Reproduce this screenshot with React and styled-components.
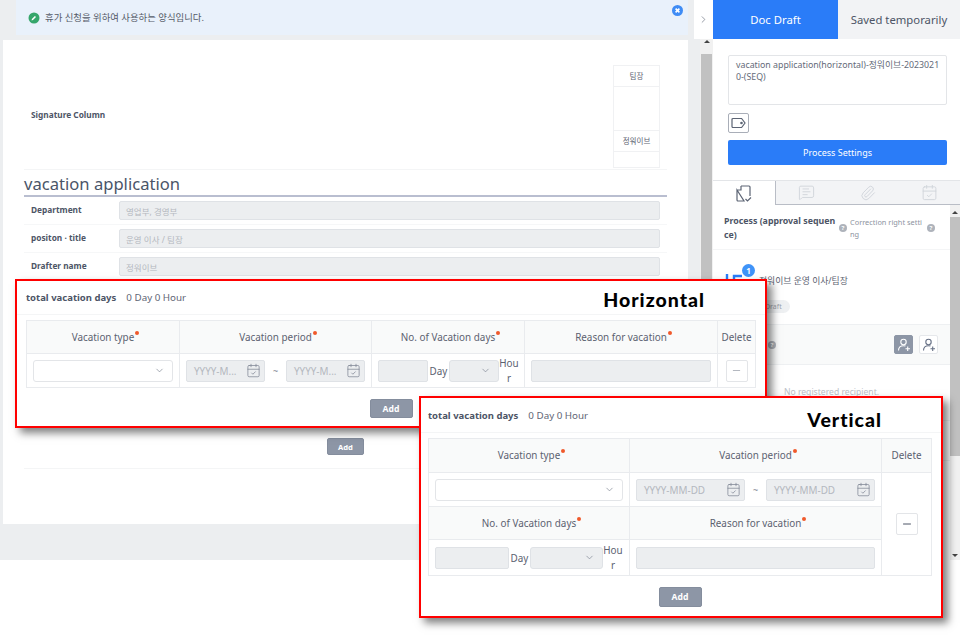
import React from 'react'
import styled, { createGlobalStyle } from 'styled-components'
import {
  CalendarCheck,
  ChevronDown,
  ChevronRight,
  MessageSquareText,
  Minus,
  Paperclip,
} from 'lucide-react'

const Global = createGlobalStyle`
  html, body { margin: 0; padding: 0; background: #fff; }
  body {
    font-family: "Noto Sans", "Noto Sans CJK KR", sans-serif;
    color: #4d5566;
    width: 960px;
    height: 636px;
    overflow: hidden;
  }
  * { box-sizing: border-box; }
`

const Page = styled.div`
  position: relative;
  width: 960px;
  height: 636px;
  overflow: hidden;
  background: #fff;
`

const Frame = styled.div`
  display: flex;
  height: 560px;
  background: #eceef0;
`

const Main = styled.div`
  width: 700px;
  padding: 0 12px 0 3px;
`

const Alert = styled.div`
  display: flex;
  align-items: center;
  gap: 5px;
  height: 35px;
  margin-left: 13px;
  padding: 0 5px 0 12px;
  background: #e9f1fb;
  font-size: 9.4px;
  color: #555b68;
`

const AlertText = styled.span`
  flex: 1;
  position: relative;
  top: -1px;
`

const AlertClose = styled.span`
  align-self: flex-start;
  margin-top: 5px;
`

const Paper = styled.div`
  margin-top: 5px;
  height: 484px;
  padding: 0 21px;
  background: #fff;
`

const SignRow = styled.div`
  display: flex;
  align-items: center;
  justify-content: space-between;
  height: 130px;
  padding: 26px 7px 3px;
  border-bottom: 1px solid #f4f5f6;
`

const BoldLabel = styled.span`
  font-size: 8.3px;
  font-weight: 700;
  color: #4d5566;
`

const SignLabel = styled(BoldLabel)`
  margin-bottom: 4px;
`

const SignTable = styled.div`
  display: grid;
  grid-template-rows: 21px 44px 21px 15px;
  width: 47px;
  border: 1px solid #f0f1f3;
  font-size: 7.5px;
  color: #5b6170;
`

const SignCell = styled.div`
  display: flex;
  align-items: center;
  justify-content: center;
  border-bottom: 1px solid #f0f1f3;
  &:last-child { border-bottom: 0; }
`

const DocTitle = styled.h1`
  margin: 0;
  height: 27px;
  padding-top: 2px;
  border-bottom: 2px solid #b9bed0;
  font-size: 16.6px;
  line-height: 24px;
  font-weight: 400;
  color: #4a5568;
`

const FormRow = styled.div`
  display: flex;
  align-items: center;
  height: 28px;
  padding: 0 7px;
  border-bottom: 1px solid #f6f7f8;
`

const FormLabel = styled(BoldLabel)`
  position: relative;
  top: -1px;
  width: 88px;
  flex: none;
`

const ReadField = styled.div`
  flex: 1;
  display: flex;
  align-items: center;
  height: 19px;
  padding: 0 6px;
  background: #eceef0;
  border: 1px solid #dfe2e6;
  border-radius: 2px;
  font-size: 8.5px;
  color: #b4b8bf;
`

const TableSection = styled.div`
  display: flex;
  justify-content: center;
  align-items: flex-end;
  height: 188px;
  padding-bottom: 13px;
  border-bottom: 1px solid #f4f5f6;
`

const AddButton = styled.button`
  width: ${p => p.$w}px;
  height: ${p => p.$h}px;
  padding: 0;
  border: 1px solid #848d9d;
  border-radius: 2px;
  background: #8d96a6;
  color: #fff;
  font: 700 ${p => p.$size}px "Noto Sans", sans-serif;
`

const ScrollTrack = styled.div`
  display: flex;
  flex-direction: column;
  align-items: center;
  flex: none;
  width: ${p => p.$w}px;
  background: #f1f1f1;
`

const ScrollArrow = styled.span`
  width: 0;
  height: 0;
  margin-top: ${p => p.$top}px;
  border-left: 3px solid transparent;
  border-right: 3px solid transparent;
  ${p => (p.$down
    ? 'border-top: 3px solid #444;'
    : 'border-bottom: 3px solid #444;')}
`

const ScrollThumb = styled.span`
  width: ${p => p.$w}px;
  height: ${p => p.$h}px;
  margin-top: ${p => p.$top}px;
  background: #c1c1c1;
`

const Toggle = styled.div`
  position: absolute;
  left: 694px;
  top: 0;
  display: flex;
  align-items: center;
  justify-content: center;
  width: 19px;
  height: 39px;
  background: #fff;
  color: #6b7280;
`

const Side = styled.aside`
  flex: 1;
  display: flex;
  flex-direction: column;
  background: #fff;
  min-width: 0;
`

const SideTabs = styled.div`
  display: grid;
  grid-template-columns: 125px 1fr;
  height: 39px;
  flex: none;
`

const SideTab = styled.div`
  display: flex;
  align-items: center;
  justify-content: center;
  font-size: 11.3px;
  background: ${p => (p.$active ? '#2a7cf8' : '#f2f3f5')};
  color: ${p => (p.$active ? '#fff' : '#4d5566')};
`

const DraftForm = styled.div`
  display: flex;
  flex-direction: column;
  align-items: flex-start;
  padding: 16px 13px 15px 15px;
  flex: none;
`

const TitleBox = styled.div`
  width: 100%;
  height: 50px;
  padding: 3px 4px 3px 7px;
  border: 1px solid #e3e5e8;
  border-radius: 2px;
  font-size: 8.8px;
  line-height: 12px;
  color: #646a78;
  word-break: break-all;
`

const TagButton = styled.button`
  display: flex;
  align-items: center;
  justify-content: center;
  width: 21px;
  height: 20px;
  margin-top: 8px;
  padding: 0;
  background: #fff;
  border: 1px solid #a9aeb8;
  border-radius: 2px;
  color: #5c6474;
`

const ProcessButton = styled.button`
  width: 100%;
  height: 25px;
  margin-top: 7px;
  border: 0;
  border-radius: 2px;
  background: #2a7cf8;
  color: #fff;
  font: 400 9px "Noto Sans", sans-serif;
`

const IconTabs = styled.div`
  display: grid;
  grid-template-columns: 63px 61px 62px 1fr;
  height: 25px;
  flex: none;
  background: #f3f4f6;
  border-top: 1px solid #e3e5e8;
`

const IconTab = styled.div`
  display: flex;
  align-items: center;
  justify-content: center;
  color: ${p => (p.$active ? '#5c6474' : '#d0d4da')};
  background: ${p => (p.$active ? '#fff' : 'transparent')};
  border-right: ${p => (p.$active ? '1px solid #b9bdc6' : '0')};
  border-bottom: ${p => (p.$active ? '0' : '1px solid #b9bdc6')};
`

const SideBody = styled.div`
  flex: 1;
  display: flex;
  min-height: 0;
`

const SideContent = styled.div`
  flex: 1;
  min-width: 0;
`

const ProcessRow = styled.div`
  display: flex;
  align-items: center;
  height: 45px;
  padding: 1px 0 0 11px;
  border-bottom: 1px solid #f4f5f6;
`

const ProcessTitle = styled.span`
  width: 113px;
  flex: none;
  font-size: 8.8px;
  line-height: 14px;
  font-weight: 700;
  color: #4d5566;
  word-break: break-all;
`

const RightNote = styled.span`
  width: 74px;
  flex: none;
  margin-left: 3px;
  font-size: 7.4px;
  line-height: 12px;
  color: #8d93a0;
  word-break: break-all;
`

const Help = styled.span`
  display: inline-flex;
  align-items: center;
  justify-content: center;
  flex: none;
  width: 8px;
  height: 8px;
  margin-left: ${p => p.$left || 0}px;
  margin-right: ${p => (p.$pushed ? 'auto' : '0')};
  border-radius: 50%;
  background: #aeb3bb;
  color: #fff;
  font-size: 6px;
  font-weight: 700;
  line-height: 1;
`

const ApproverRow = styled.div`
  height: 75px;
  padding: 18px 0 0 12px;
  border-bottom: 1px solid #eef0f2;
`

const ApproverLine = styled.div`
  display: flex;
  align-items: center;
  height: 24px;
  font-size: 8.8px;
  color: #5b6170;
`

const AvatarWrap = styled.span`
  position: relative;
  display: block;
  width: 34px;
  height: 24px;
  padding-top: 4px;
  flex: none;
  color: #2a7cf8;
`

const CountBadge = styled.span`
  position: absolute;
  left: 17px;
  top: -4px;
  display: flex;
  align-items: center;
  justify-content: center;
  width: 13px;
  height: 13px;
  border-radius: 50%;
  background: #3f93f8;
  color: #fff;
  font-size: 8px;
  font-weight: 700;
`

const StatusPill = styled.span`
  display: inline-flex;
  align-items: center;
  height: 13px;
  margin: -3px 0 0 26px;
  padding: 0 8px 0 14px;
  border-radius: 7px;
  background: #eef0f2;
  font-size: 7px;
  color: #9aa0ab;
`

const RecipientHead = styled.div`
  display: flex;
  align-items: center;
  gap: 6px;
  height: 40px;
  padding-right: 12px;
  background: #f9fafa;
  border-bottom: 1px solid #eef0f2;
`

const PersonButton = styled.span`
  display: flex;
  align-items: center;
  justify-content: center;
  width: 19px;
  height: 19px;
  border-radius: 2px;
  border: 1px solid ${p => (p.$filled ? '#8d96a6' : '#e6e8eb')};
  background: ${p => (p.$filled ? '#8d96a6' : '#fff')};
  color: ${p => (p.$filled ? '#fff' : '#667085')};
`

const EmptyNote = styled.div`
  height: 56px;
  padding-top: 21px;
  text-align: center;
  font-size: 8.6px;
  color: #bcc0c7;
  border-bottom: 1px solid #f1f2f4;
`

const BlankRow = styled.div`
  height: 40px;
  border-bottom: 1px solid #f1f2f4;
`

const Callout = styled.section`
  position: absolute;
  left: ${p => p.$x}px;
  top: ${p => p.$y}px;
  width: ${p => p.$w}px;
  height: ${p => p.$h}px;
  padding: 0 9px 0 ${p => p.$inset}px;
  background: #fff;
  border: 2px solid #f00;
  box-shadow: 5px 5px 8px rgba(0, 0, 0, 0.5);
`

const CalloutHead = styled.div`
  display: flex;
  align-items: center;
  height: ${p => p.$h}px;
  margin: 0 -9px 0 -${p => p.$inset}px;
  padding: 0 9px 0 ${p => p.$inset}px;
  border-bottom: 1px solid #f4f5f6;
`

const TotalLabel = styled.span`
  font-size: 9.5px;
  font-weight: 700;
  color: #4d5566;
`

const TotalValue = styled.span`
  margin-left: 10px;
  font-size: 9.8px;
  color: #5f6675;
`

const CalloutName = styled.span`
  margin-left: auto;
  margin-right: ${p => p.$right}px;
  padding-top: ${p => p.$drop}px;
  font-family: "Lato", sans-serif;
  font-size: 19.5px;
  font-weight: 900;
  letter-spacing: 1px;
  color: #000;
`

const VacationTable = styled.table`
  width: 100%;
  margin-top: 5px;
  table-layout: fixed;
  border-collapse: collapse;
  border: 1px solid #e9ebee;
  font-size: 9.9px;
  color: #5b6170;
`

const HeadCell = styled.th`
  height: ${p => p.$h || 33}px;
  padding: 0 0 1px;
  background: #f9fafa;
  border: 1px solid #e9ebee;
  font-weight: 400;
  text-align: center;
`

const BodyCell = styled.td`
  height: ${p => p.$h || 34}px;
  padding: 0 6px;
  border: 1px solid #e9ebee;
  text-align: center;
`

// the dot takes no width, so the header text stays centred on its own
const Required = styled.i`
  position: relative;
  display: inline-block;
  width: 0;
  height: 0;

  &::after {
    content: '';
    position: absolute;
    left: 1px;
    top: -10px;
    width: 4px;
    height: 4px;
    border-radius: 50%;
    background: #f0592b;
  }
`

const InputRow = styled.div`
  display: flex;
  align-items: center;
`

const SelectBox = styled.div`
  display: flex;
  align-items: center;
  justify-content: flex-end;
  flex: ${p => (p.$w ? 'none' : 1)};
  width: ${p => (p.$w ? `${p.$w}px` : 'auto')};
  height: 22px;
  padding-right: 7px;
  background: ${p => (p.$disabled ? '#eceef0' : '#fff')};
  border: 1px solid ${p => (p.$disabled ? '#dfe2e6' : '#e3e5e8')};
  border-radius: 3px;
  color: #7d8492;
`

const DateBox = styled.div`
  display: flex;
  align-items: center;
  flex: 1;
  min-width: 0;
  height: 22px;
  padding: 0 3px 0 7px;
  background: #eceef0;
  border: 1px solid #dfe2e6;
  border-radius: 2px;
  color: #7f8694;
`

const DateText = styled.span`
  flex: 1;
  min-width: 0;
  white-space: nowrap;
  text-align: left;
  color: #b4b8bf;
`

const Tilde = styled.span`
  width: 21px;
  flex: none;
  font-size: 9px;
  color: #7d8492;
`

const PlainInput = styled.div`
  flex: ${p => (p.$w ? 'none' : 1)};
  width: ${p => (p.$w ? `${p.$w}px` : 'auto')};
  height: 22px;
  background: #eceef0;
  border: 1px solid #dfe2e6;
  border-radius: 2px;
`

const DayLabel = styled.span`
  width: 21px;
  flex: none;
`

const HourLabel = styled.span`
  width: 20px;
  flex: none;
  line-height: 15px;
  word-break: break-all;
  text-align: center;
`

const DeleteButton = styled.button`
  display: inline-flex;
  align-items: center;
  justify-content: center;
  width: 22px;
  height: 22px;
  padding: 0;
  background: #fff;
  border: 1px solid #e3e5e8;
  border-radius: 2px;
  color: ${p => (p.$dark ? '#4d5566' : '#8a909d')};
`

const CalloutFooter = styled.div`
  display: flex;
  justify-content: center;
  margin-top: 11px;
`

const Svg = styled.svg`
  display: block;
  flex: none;
`

const CheckBadge = () => (
  <Svg width="12" height="12" viewBox="0 0 12 12">
    <circle cx="6" cy="6" r="5.5" fill="#35a66b" />
    <path d="M3.6 8.4l.3-1.4 3-3 1.1 1.1-3 3z" fill="#fff" />
  </Svg>
)

const CloseBadge = () => (
  <Svg width="11" height="11" viewBox="0 0 11 11">
    <circle cx="5.5" cy="5.5" r="5.5" fill="#3f8cf5" />
    <path d="M3.6 3.6l3.8 3.8M7.4 3.6L3.6 7.4" stroke="#fff" strokeWidth="1.6" />
  </Svg>
)

const TagIcon = () => (
  <Svg width="15" height="12" viewBox="0 0 15 12" fill="none" stroke="currentColor" strokeWidth="1.2">
    <path d="M1 2.5a1 1 0 0 1 1-1h8.6L14 6l-3.4 4.5H2a1 1 0 0 1-1-1z" />
    <circle cx="10.5" cy="6" r=".7" fill="currentColor" />
  </Svg>
)

const DocCheckIcon = () => (
  <Svg width="16" height="17" viewBox="0 0 16 17" fill="none" stroke="currentColor" strokeWidth="1.2">
    <path d="M5 1h8a1 1 0 0 1 1 1v9M8 16H2a1 1 0 0 1-1-1V5zM5 1v4H1" />
    <path d="M9.5 14l2 2 3.5-3.5" />
  </Svg>
)

const PersonPlus = () => (
  <Svg width="14" height="14" viewBox="0 0 14 14" fill="none" stroke="currentColor" strokeWidth="1.1">
    <circle cx="6.5" cy="4" r="2.7" />
    <path d="M1.5 12.5c0-3 2-4.8 5-4.8 .8 0 1.4.1 2 .4M10.7 8.5v4.5M8.5 10.8H13" />
  </Svg>
)

const Avatar = () => (
  <Svg width="20" height="14" viewBox="0 0 20 14" fill="none" stroke="currentColor" strokeWidth="2.4">
    <path d="M2 2v8c0 2 1.5 3 3.5 3S9 12 9 10V4h8" />
  </Svg>
)

const DateField = ({ placeholder }) => (
  <DateBox>
    <DateText>{placeholder}</DateText>
    <CalendarCheck size={15} strokeWidth={1.2} />
  </DateBox>
)

const DateRange = ({ placeholder }) => (
  <InputRow>
    <DateField placeholder={placeholder} />
    <Tilde>~</Tilde>
    <DateField placeholder={placeholder} />
  </InputRow>
)

const Chevron = () => <ChevronDown size={11} strokeWidth={1.5} />

const DaysInput = ({ dayWidth, selectWidth }) => (
  <InputRow>
    <PlainInput $w={dayWidth} />
    <DayLabel>Day</DayLabel>
    <SelectBox $w={selectWidth} $disabled>
      <Chevron />
    </SelectBox>
    <HourLabel>Hour</HourLabel>
  </InputRow>
)

const Total = ({ name, right, height, inset, drop }) => (
  <CalloutHead $h={height} $inset={inset}>
    <TotalLabel>total vacation days</TotalLabel>
    <TotalValue>0 Day 0 Hour</TotalValue>
    <CalloutName $right={right} $drop={drop}>{name}</CalloutName>
  </CalloutHead>
)

const Label = ({ children }) => (
  <>
    {children}
    <Required />
  </>
)

const HorizontalCallout = () => (
  <Callout $x={15} $y={279} $w={752} $h={149} $inset={9}>
    <Total name="Horizontal" right={51} height={34} inset={9} drop={4} />
    <VacationTable>
      <colgroup>
        <col width="153" />
        <col width="192" />
        <col width="153" />
        <col width="193" />
        <col />
      </colgroup>
      <thead>
        <tr>
          <HeadCell><Label>Vacation type</Label></HeadCell>
          <HeadCell><Label>Vacation period</Label></HeadCell>
          <HeadCell><Label>No. of Vacation days</Label></HeadCell>
          <HeadCell><Label>Reason for vacation</Label></HeadCell>
          <HeadCell>Delete</HeadCell>
        </tr>
      </thead>
      <tbody>
        <tr>
          <BodyCell>
            <InputRow>
              <SelectBox><Chevron /></SelectBox>
            </InputRow>
          </BodyCell>
          <BodyCell><DateRange placeholder="YYYY-M..." /></BodyCell>
          <BodyCell><DaysInput dayWidth={50} selectWidth={50} /></BodyCell>
          <BodyCell><PlainInput /></BodyCell>
          <BodyCell>
            <DeleteButton><Minus size={11} strokeWidth={1.4} /></DeleteButton>
          </BodyCell>
        </tr>
      </tbody>
    </VacationTable>
    <CalloutFooter>
      <AddButton $w={43} $h={19} $size={8.6}>Add</AddButton>
    </CalloutFooter>
  </Callout>
)

const VerticalCallout = () => (
  <Callout $x={419} $y={396} $w={524} $h={222} $inset={7}>
    <Total name="Vertical" right={50} height={35} inset={7} drop={8} />
    <VacationTable>
      <colgroup>
        <col width="201" />
        <col width="252" />
        <col />
      </colgroup>
      <tbody>
        <tr>
          <HeadCell $h={34}><Label>Vacation type</Label></HeadCell>
          <HeadCell $h={34}><Label>Vacation period</Label></HeadCell>
          <HeadCell $h={34}>Delete</HeadCell>
        </tr>
        <tr>
          <BodyCell>
            <InputRow>
              <SelectBox><Chevron /></SelectBox>
            </InputRow>
          </BodyCell>
          <BodyCell><DateRange placeholder="YYYY-MM-DD" /></BodyCell>
          <BodyCell rowSpan={3}>
            <DeleteButton $dark><Minus size={12} strokeWidth={2} /></DeleteButton>
          </BodyCell>
        </tr>
        <tr>
          <HeadCell><Label>No. of Vacation days</Label></HeadCell>
          <HeadCell><Label>Reason for vacation</Label></HeadCell>
        </tr>
        <tr>
          <BodyCell $h={36}><DaysInput dayWidth={74} selectWidth={73} /></BodyCell>
          <BodyCell $h={36}><PlainInput /></BodyCell>
        </tr>
      </tbody>
    </VacationTable>
    <CalloutFooter>
      <AddButton $w={43} $h={20} $size={8.6}>Add</AddButton>
    </CalloutFooter>
  </Callout>
)

const App = () => (
  <Page>
    <Global />
    <Frame>
      <Main>
        <Alert>
          <CheckBadge />
          <AlertText>휴가 신청을 위하여 사용하는 양식입니다.</AlertText>
          <AlertClose><CloseBadge /></AlertClose>
        </Alert>
        <Paper>
          <SignRow>
            <SignLabel>Signature Column</SignLabel>
            <SignTable>
              <SignCell>팀장</SignCell>
              <SignCell />
              <SignCell>정워이브</SignCell>
              <SignCell />
            </SignTable>
          </SignRow>
          <DocTitle>vacation application</DocTitle>
          <FormRow>
            <FormLabel>Department</FormLabel>
            <ReadField>영업부, 경영부</ReadField>
          </FormRow>
          <FormRow>
            <FormLabel>positon · title</FormLabel>
            <ReadField>운영 이사 / 팀장</ReadField>
          </FormRow>
          <FormRow>
            <FormLabel>Drafter name</FormLabel>
            <ReadField>정워이브</ReadField>
          </FormRow>
          <TableSection>
            <AddButton $w={37} $h={17} $size={7.6}>Add</AddButton>
          </TableSection>
        </Paper>
      </Main>
      <ScrollTrack $w={13}>
        <ScrollArrow $top={40} />
        <ScrollThumb $w={11} $h={504} $top={11} />
      </ScrollTrack>
      <Side>
        <SideTabs>
          <SideTab $active>Doc Draft</SideTab>
          <SideTab>Saved temporarily</SideTab>
        </SideTabs>
        <DraftForm>
          <TitleBox>vacation application(horizontal)-정워이브-20230210-(SEQ)</TitleBox>
          <TagButton><TagIcon /></TagButton>
          <ProcessButton>Process Settings</ProcessButton>
        </DraftForm>
        <IconTabs>
          <IconTab $active><DocCheckIcon /></IconTab>
          <IconTab><MessageSquareText size={17} strokeWidth={1.3} /></IconTab>
          <IconTab><Paperclip size={16} strokeWidth={1.4} /></IconTab>
          <IconTab><CalendarCheck size={17} strokeWidth={1.3} /></IconTab>
        </IconTabs>
        <SideBody>
          <SideContent>
            <ProcessRow>
              <ProcessTitle>Process (approval sequence)</ProcessTitle>
              <Help $left={2}>?</Help>
              <RightNote>Correction right setting</RightNote>
              <Help $left={3}>?</Help>
            </ProcessRow>
            <ApproverRow>
              <ApproverLine>
                <AvatarWrap>
                  <Avatar />
                  <CountBadge>1</CountBadge>
                </AvatarWrap>
                정워이브 운영 이사/팀장
              </ApproverLine>
              <StatusPill>Draft</StatusPill>
            </ApproverRow>
            <RecipientHead>
              <Help $left={55} $pushed>?</Help>
              <PersonButton $filled><PersonPlus /></PersonButton>
              <PersonButton><PersonPlus /></PersonButton>
            </RecipientHead>
            <EmptyNote>No registered recipient.</EmptyNote>
            <BlankRow />
          </SideContent>
          <ScrollTrack $w={10}>
            <ScrollArrow $top={6} />
            <ScrollThumb $w={10} $h={239} $top={3} />
            <ScrollArrow $top={98} $down />
          </ScrollTrack>
        </SideBody>
      </Side>
    </Frame>
    <Toggle><ChevronRight size={11} strokeWidth={1.5} /></Toggle>
    <HorizontalCallout />
    <VerticalCallout />
  </Page>
)

export default App
